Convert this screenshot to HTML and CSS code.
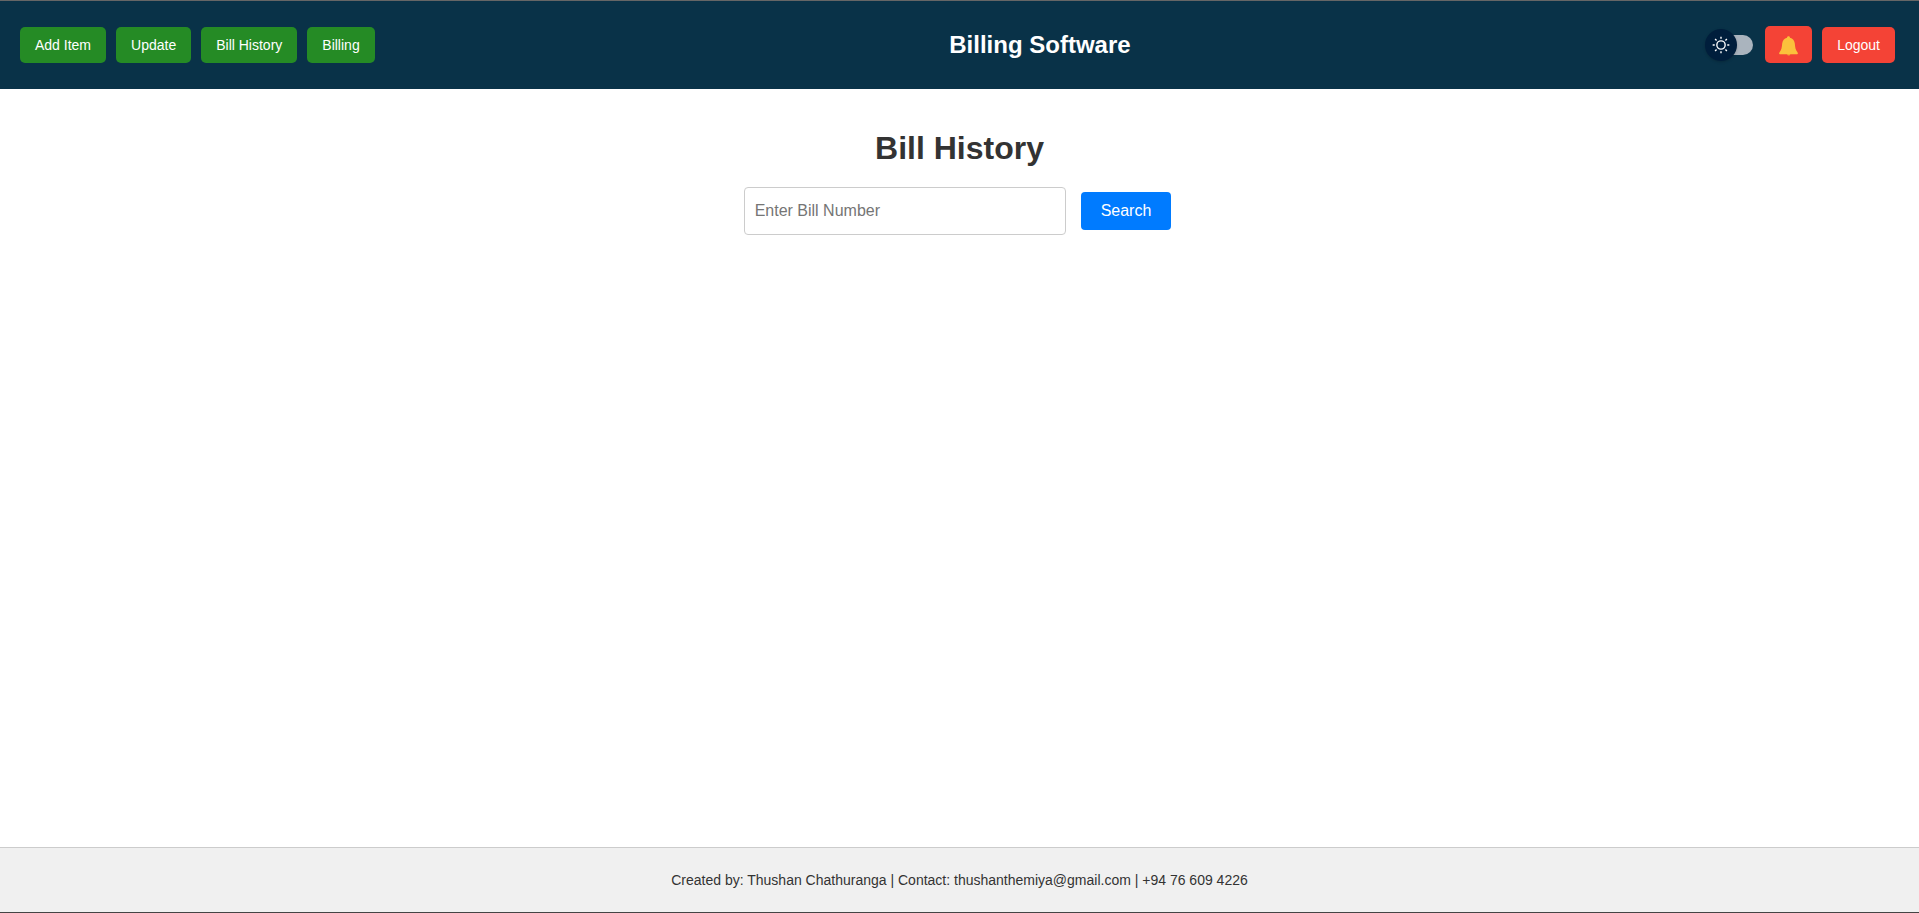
FILE: index.html
```html
<!DOCTYPE html>
<html lang="en">
<head>
<meta charset="utf-8">
<meta name="viewport" content="width=device-width, initial-scale=1">
<title>Billing Software</title>
<link rel="stylesheet" href="styles.css">
</head>
<body class="page">
<header class="topbar">
  <nav class="nav">
    <button class="btn" type="button">Add Item</button>
    <button class="btn" type="button">Update</button>
    <button class="btn" type="button">Bill History</button>
    <button class="btn" type="button">Billing</button>
  </nav>
  <div class="brand">Billing Software</div>
  <div class="actions">
    <label class="switch">
      <input class="switch-input" type="checkbox" aria-label="Dark mode">
      <span class="switch-thumb">
        <svg width="20" height="20" viewBox="0 0 20 20" fill="#fff" aria-hidden="true"><path d="M9.305 1.667V3.75h1.389V1.667h-1.39zm-4.707 1.95l-.982.982L5.09 6.072l.982-.982-1.473-1.473zm10.802 0L13.927 5.09l.982.982 1.473-1.473-.982-.982zM10 5.139a4.872 4.872 0 00-4.862 4.86A4.872 4.872 0 0010 14.862 4.872 4.872 0 0014.86 10 4.872 4.872 0 0010 5.139zm0 1.389A3.462 3.462 0 0113.471 10a3.462 3.462 0 01-3.473 3.472A3.462 3.462 0 016.527 10 3.462 3.462 0 0110 6.528zM1.665 9.305v1.39h2.083v-1.39H1.666zm14.583 0v1.39h2.084v-1.39h-2.084zM5.09 13.928L3.616 15.4l.982.982 1.473-1.473-.982-.982zm9.82 0l-.982.982 1.473 1.473.982-.982-1.473-1.473zM9.305 16.25v2.083h1.389V16.25h-1.39z"/></svg>
      </span>
    </label>
    <button class="btn btn-red btn-bell" type="button" aria-label="Notifications">
      <svg width="19" height="20" viewBox="0 0 19 20" aria-hidden="true">
        <path d="M8 17h3.4c0 1.600-.6 2.600-1.700 2.600S8 18.600 8 17z" fill="#f2a22c"/>
        <path d="M9.500.2c.9 0 1.500.6 1.500 1.500 2.800.7 4.500 2.800 4.800 5.800.4 4 .7 6.300 2.500 8.400.7.900.9 2.400-.2 2.400H.9c-1.100 0-.9-1.500-.2-2.400 1.800-2.100 2.100-4.400 2.500-8.400.3-3 2-5.100 4.800-5.800C8 .8 8.600.2 9.500.2z" fill="#fbc13c"/>
      </svg>
    </button>
    <button class="btn btn-red" type="button">Logout</button>
  </div>
</header>
<main class="content">
  <h1 class="title">Bill History</h1>
  <form class="search">
    <input class="search-input" type="text" placeholder="Enter Bill Number" aria-label="Bill number">
    <button class="search-btn" type="button">Search</button>
  </form>
</main>
<footer class="footer">Created by: Thushan Chathuranga | Contact: thushanthemiya@gmail.com | +94 76 609 4226</footer>
</body>
</html>
```
FILE: styles.css
```css
* { box-sizing: border-box; }

.page {
  margin: 0;
  min-height: 100vh;
  display: flex;
  flex-direction: column;
  background: #fff;
  color: #333;
  font-family: "Liberation Sans", Arial, sans-serif;
}

.topbar {
  display: flex;
  align-items: center;
  justify-content: space-between;
  padding: 25px 24px 26px 20px;
  border-top: 1px solid #666;
  background: #093248;
}

.nav,
.actions {
  display: flex;
  align-items: center;
  gap: 10px;
}

.btn {
  padding: 10px 15px;
  border: 0;
  border-radius: 5px;
  background: #258b25;
  color: #fff;
  font: 14px/16px "Liberation Sans", Arial, sans-serif;
}

.btn-red { background: #f44336; }

.btn-bell {
  display: flex;
  height: 37px;
  padding: 10px 14px 7px;
}

.brand {
  color: #fff;
  font-size: 24px;
  font-weight: bold;
}

.switch {
  position: relative;
  display: flex;
  align-items: center;
  width: 48px;
  height: 32px;
  margin-right: 2px;
}

.switch-input {
  appearance: none;
  width: 40px;
  height: 20px;
  margin: 0 0 0 8px;
  border-radius: 10px;
  background: #aab4be;
}

.switch-thumb {
  position: absolute;
  left: 0;
  top: 0;
  display: grid;
  place-items: center;
  width: 32px;
  height: 32px;
  border-radius: 50%;
  background: #001e3c;
  box-shadow: 0 1px 3px rgba(0, 0, 0, 0.2);
}

.content {
  flex: 1;
  padding: 40px 20px;
}

.title {
  margin: 0 0 20px;
  font-size: 32px;
  line-height: 38px;
  text-align: center;
}

.search {
  display: flex;
  align-items: center;
  justify-content: center;
  gap: 15px;
  padding-right: 4px;
}

.search-input {
  width: 322px;
  height: 48px;
  padding: 10px;
  border: 1px solid #ccc;
  border-radius: 4px;
  font: 16px "Liberation Sans", Arial, sans-serif;
}

.search-input::placeholder { color: #757575; }

.search-btn {
  padding: 10px 20px;
  border: 0;
  border-radius: 4px;
  background: #007bff;
  color: #fff;
  font: 16px/18px "Liberation Sans", Arial, sans-serif;
}

.footer {
  padding: 24px 20px;
  border-top: 1px solid #ccc;
  border-bottom: 1px solid #444;
  background: #f0f0f0;
  font-size: 14px;
  line-height: 16px;
  text-align: center;
}
```
